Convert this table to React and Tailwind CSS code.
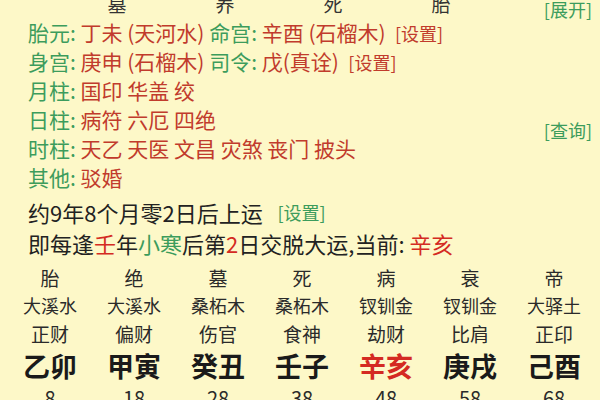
import React from "react";

const G = "text-[#3c9c5c]";
const R = "text-[#c13b2c]";

const Row = ({ label, children }) => (
  <div className="flex items-center h-[29px] text-[21px] leading-none whitespace-pre">
    <span className={G}>{label}: </span>
    {children}
  </div>
);

const cols = [
  { a: "胎", b: "大溪水", c: "正财", d: "乙卯", n: "8" },
  { a: "绝", b: "大溪水", c: "偏财", d: "甲寅", n: "18" },
  { a: "墓", b: "桑柘木", c: "伤官", d: "癸丑", n: "28" },
  { a: "死", b: "桑柘木", c: "食神", d: "壬子", n: "38" },
  { a: "病", b: "钗钏金", c: "劫财", d: "辛亥", n: "48", red: true },
  { a: "衰", b: "钗钏金", c: "比肩", d: "庚戌", n: "58" },
  { a: "帝", b: "大驿土", c: "正印", d: "己酉", n: "68" },
];

export default function App() {
  return (
    <div
      className="w-[600px] h-[400px] overflow-hidden bg-[#fdf8c8] text-[#222]"
      style={{ fontFamily: '"Noto Sans CJK SC", "Noto Sans", sans-serif' }}
    >
      {/* cut-off header row */}
      <div className="flex items-start -mt-[6px] h-[22px]">
        <span className="w-[63px] shrink-0 pl-[18px] text-[16px] leading-none whitespace-nowrap overflow-hidden text-[#3c9c5c] -mt-[13px]">
          [流年]
        </span>
        {["墓", "养", "死", "胎"].map((t) => (
          <span key={t} className="w-[108px] shrink-0 text-center text-[19px] leading-none text-[#333]">
            {t}
          </span>
        ))}
        <span className="ml-auto mr-[8px] mt-[6px] text-[18px] leading-none text-[#3c9c5c]">[展开]</span>
      </div>

      <div className="pl-[28px] pr-[8px] pt-[2px]">
        <Row label="胎元">
          <span className={R}>丁未 (天河水) </span>
          <span className={G}>命宫: </span>
          <span className={R}>辛酉 (石榴木)  </span>
          <span className={`${R} text-[18px]`}>[设置]</span>
        </Row>
        <Row label="身宫">
          <span className={R}>庚申 (石榴木) </span>
          <span className={G}>司令: </span>
          <span className={R}>戊(真诠)  </span>
          <span className={`${R} text-[18px]`}>[设置]</span>
        </Row>
        <Row label="月柱">
          <span className={R}>国印 华盖 绞</span>
        </Row>
        <div className="flex items-center">
          <div>
            <Row label="日柱">
              <span className={R}>病符 六厄 四绝</span>
            </Row>
            <Row label="时柱">
              <span className={R}>天乙 天医 文昌 灾煞 丧门 披头</span>
            </Row>
          </div>
          <span className="ml-auto -mt-[8px] text-[18px] text-[#3c9c5c]">[查询]</span>
        </div>
        <Row label="其他">
          <span className={R}>驳婚</span>
        </Row>

        <div className="mt-[4px] flex items-center h-[31px] text-[22px] leading-none whitespace-pre">
          约9年8个月零2日后上运   <span className="text-[18px] text-[#3c9c5c]">[设置]</span>
        </div>
        <div className="flex items-center h-[31px] text-[22px] leading-none whitespace-pre">
          即每逢<span className="text-[#d42a22]">壬</span>年
          <span className="text-[#3c9c5c]">小寒</span>后第
          <span className="text-[#d42a22]">2</span>日交脱大运,当前: <span className="text-[#d42a22]">辛亥</span>
        </div>
      </div>

      <div className="grid grid-cols-7 w-[588px] ml-[8px] mt-[6px] text-[#2a2a2a]">
        {cols.map((c) => (
          <div key={c.d} className="flex flex-col items-center leading-none">
            <span className="text-[19px] h-[27px] flex items-center">{c.a}</span>
            <span className="text-[18px] h-[27px] flex items-center">{c.b}</span>
            <span className="text-[19px] h-[30px] flex items-center">{c.c}</span>
            <span
              className={`text-[27px] font-bold h-[34px] flex items-center ${
                c.red ? "text-[#d42a22]" : "text-[#1a1a1a]"
              }`}
            >
              {c.d}
            </span>
            <span className="text-[20px] h-[26px] flex items-end">{c.n}</span>
          </div>
        ))}
      </div>
    </div>
  );
}
